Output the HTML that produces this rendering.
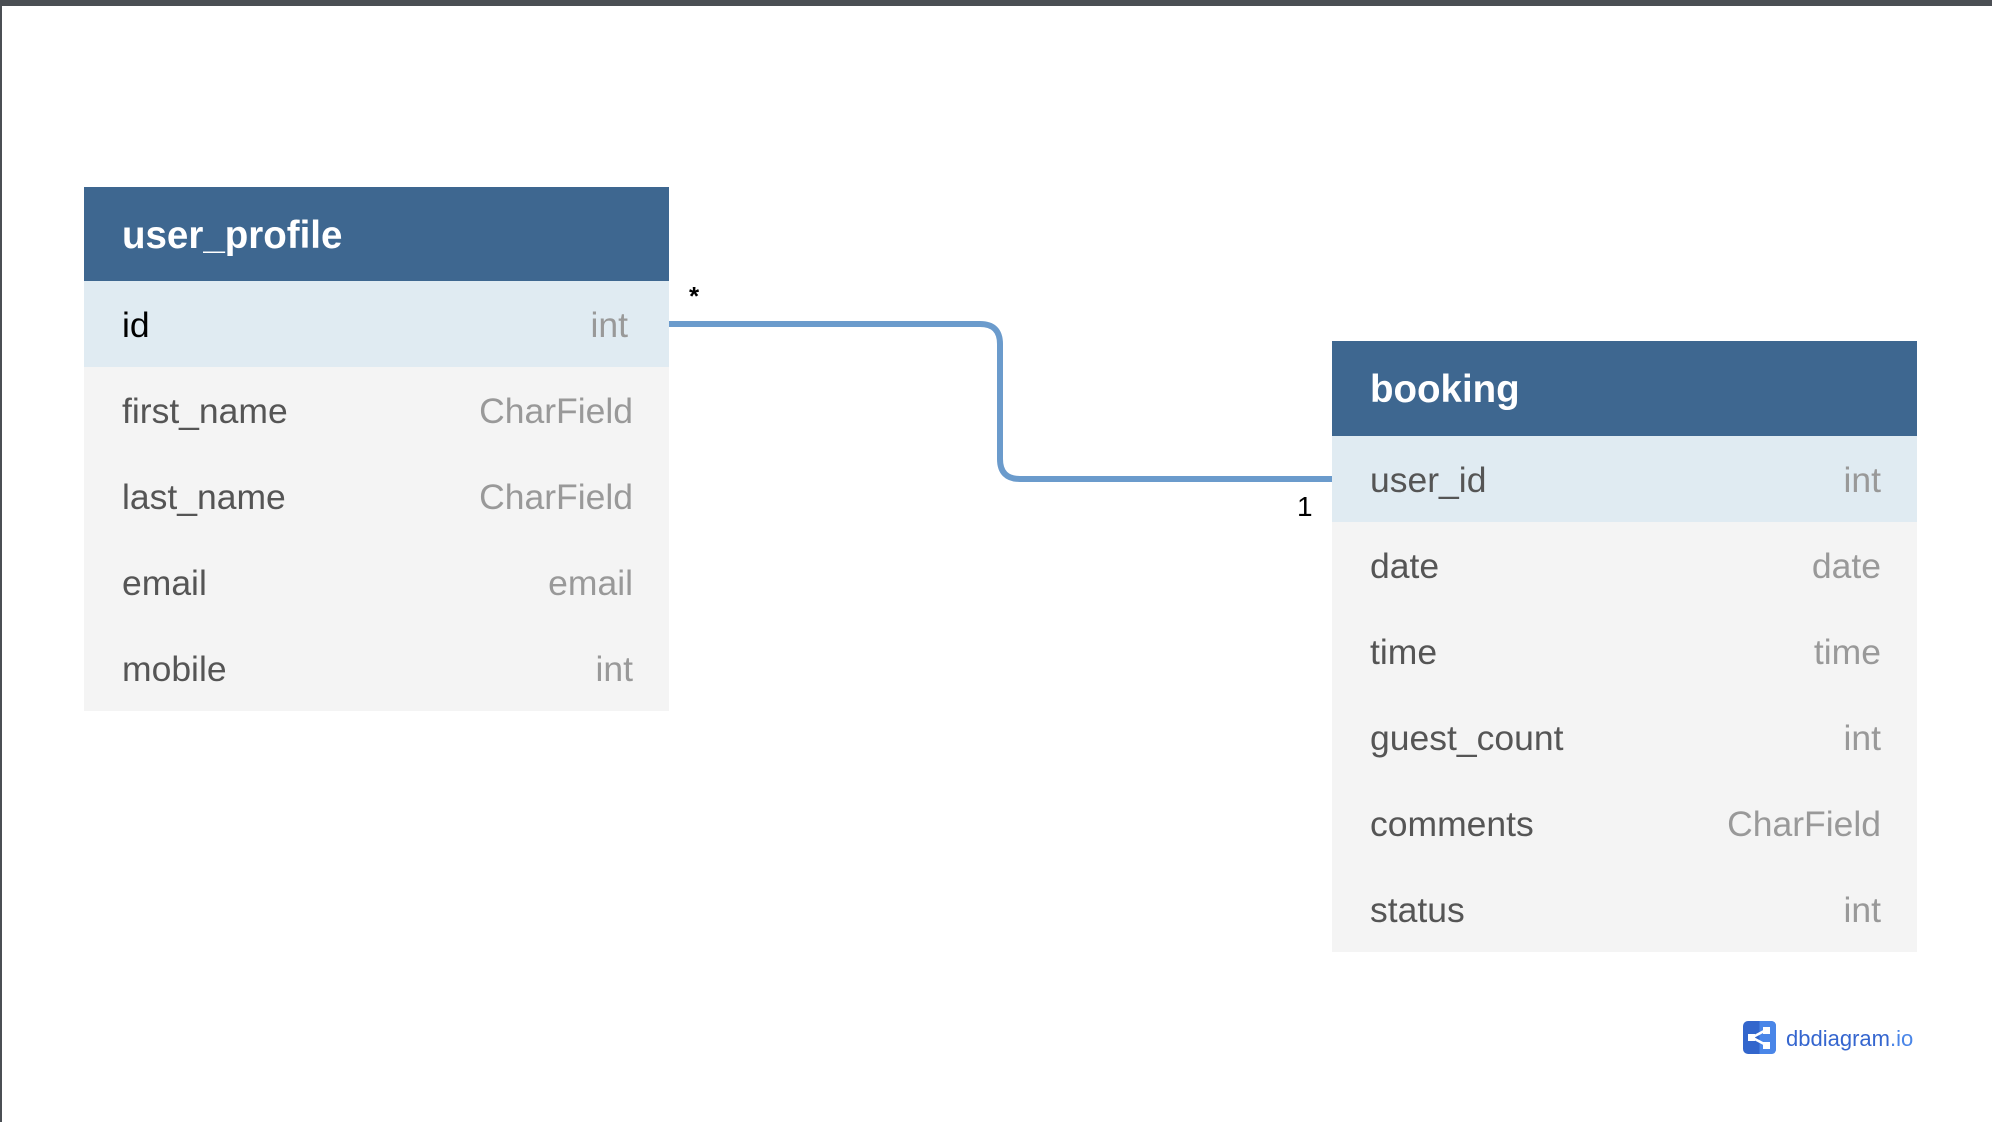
<!DOCTYPE html>
<html><head><meta charset="utf-8"><style>
html,body{margin:0;padding:0}
body{width:1992px;height:1122px;position:relative;overflow:hidden;background:#fff;font-family:"Liberation Sans",Arial,sans-serif}
.topbar{position:absolute;left:0;top:0;width:1992px;height:6px;background:#4b4f54}
.leftbar{position:absolute;left:0;top:0;width:2px;height:1122px;background:#4b4f54}
.tbl{position:absolute;background:#f4f4f4}
.hd{height:94px;background:#3e6790;color:#fff;font-weight:bold;font-size:38.5px;padding-left:38px;padding-top:3px;box-sizing:border-box}
.row{height:86px;display:flex;justify-content:space-between;align-items:center;padding:3px 36px 0 38px;box-sizing:border-box;font-size:35.5px;color:#555}
.row .t{color:#999}
.pk{background:#e0ebf2}
.lbl{position:absolute;font-size:28px;color:#000}
</style></head><body>
<div class="topbar"></div><div class="leftbar"></div>
<svg style="position:absolute;left:0;top:0" width="1992" height="1122">
<path d="M669 324 H980 Q1000 324 1000 344 V459 Q1000 479 1020 479 H1332" fill="none" stroke="#6b9bcc" stroke-width="6"/>
</svg>
<div class="tbl" style="left:84px;top:187px;width:585px;height:524px">
<div class="hd" style="height:94px;line-height:91px">user_profile</div>
<div class="row pk"><span style="color:#000">id</span><span class="t" style="margin-right:5px">int</span></div>
<div class="row"><span>first_name</span><span class="t">CharField</span></div>
<div class="row"><span>last_name</span><span class="t">CharField</span></div>
<div class="row"><span>email</span><span class="t">email</span></div>
<div class="row"><span>mobile</span><span class="t">int</span></div>
</div>
<div class="lbl" style="left:689px;top:281px;font-weight:bold;font-size:26px">*</div>
<div class="lbl" style="left:1297px;top:491px">1</div>
<div class="tbl" style="left:1332px;top:341px;width:585px;height:611px">
<div class="hd" style="height:95px;line-height:92px">booking</div>
<div class="row pk"><span>user_id</span><span class="t">int</span></div>
<div class="row"><span>date</span><span class="t">date</span></div>
<div class="row"><span>time</span><span class="t">time</span></div>
<div class="row"><span>guest_count</span><span class="t">int</span></div>
<div class="row"><span>comments</span><span class="t">CharField</span></div>
<div class="row"><span>status</span><span class="t">int</span></div>
</div>
<svg style="position:absolute;left:1743px;top:1021px" width="33" height="33" viewBox="0 0 33 33">
<rect width="33" height="33" rx="5" fill="#3366cc"/>
<path d="M16.5 0 H28 Q33 0 33 5 V28 Q33 33 28 33 H16.5 Z" fill="#4a86e8"/>
<path d="M9 16.5 L23 9 M9 16.5 L23 24" stroke="#fff" stroke-width="2.5"/>
<rect x="5" y="13" width="7" height="7" fill="#fff"/>
<rect x="20" y="6" width="7" height="7" fill="#fff"/>
<rect x="20" y="21" width="7" height="7" fill="#fff"/>
</svg>
<div style="position:absolute;left:1786px;top:1026px;font-size:22px;color:#3566cf">dbdiagram<span style="color:#4a86e8">.io</span></div>
</body></html>
